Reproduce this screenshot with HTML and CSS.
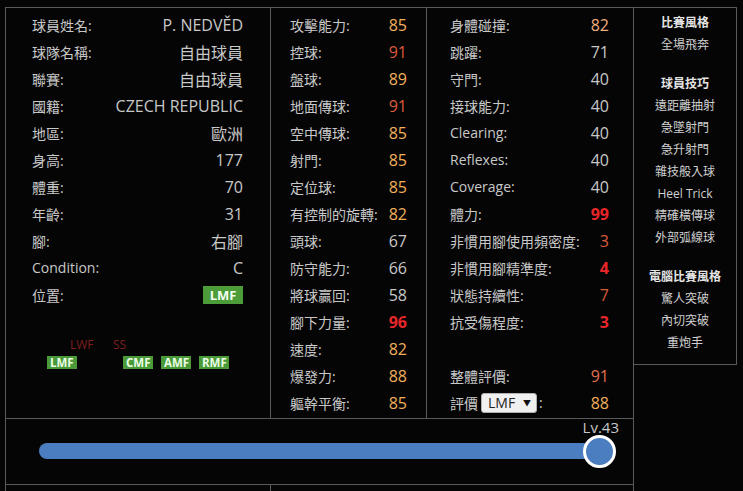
FILE: index.html
```html
<!DOCTYPE html>
<html lang="zh-Hant">
<head>
<meta charset="utf-8">
<title>P. NEDVĚD</title>
<link rel="stylesheet" href="styles.css">
</head>
<body>
<div class="page">
  <div class="sheet">
    <div class="cell info">
      <div class="row"><span class="k">球員姓名:</span><span class="v">P. NEDVĚD</span></div>
      <div class="row"><span class="k">球隊名稱:</span><span class="v">自由球員</span></div>
      <div class="row"><span class="k">聯賽:</span><span class="v">自由球員</span></div>
      <div class="row"><span class="k">國籍:</span><span class="v">CZECH REPUBLIC</span></div>
      <div class="row"><span class="k">地區:</span><span class="v">歐洲</span></div>
      <div class="row"><span class="k">身高:</span><span class="v">177</span></div>
      <div class="row"><span class="k">體重:</span><span class="v">70</span></div>
      <div class="row"><span class="k">年齡:</span><span class="v">31</span></div>
      <div class="row"><span class="k">腳:</span><span class="v">右腳</span></div>
      <div class="row"><span class="k">Condition:</span><span class="v">C</span></div>
      <div class="row"><span class="k">位置:</span><span class="badge">LMF</span></div>
      <div class="pitch">
        <span class="pin red lwf">LWF</span>
        <span class="pin red ss">SS</span>
        <span class="pin green lmf">LMF</span>
        <span class="pin green cmf">CMF</span>
        <span class="pin green amf">AMF</span>
        <span class="pin green rmf">RMF</span>
      </div>
    </div>
    <div class="cell stats mid">
      <div class="row"><span class="k">攻擊能力:</span><span class="v c80">85</span></div>
      <div class="row"><span class="k">控球:</span><span class="v c90">91</span></div>
      <div class="row"><span class="k">盤球:</span><span class="v c80">89</span></div>
      <div class="row"><span class="k">地面傳球:</span><span class="v c90">91</span></div>
      <div class="row"><span class="k">空中傳球:</span><span class="v c80">85</span></div>
      <div class="row"><span class="k">射門:</span><span class="v c80">85</span></div>
      <div class="row"><span class="k">定位球:</span><span class="v c80">85</span></div>
      <div class="row"><span class="k">有控制的旋轉:</span><span class="v c80">82</span></div>
      <div class="row"><span class="k">頭球:</span><span class="v">67</span></div>
      <div class="row"><span class="k">防守能力:</span><span class="v">66</span></div>
      <div class="row"><span class="k">將球贏回:</span><span class="v">58</span></div>
      <div class="row"><span class="k">腳下力量:</span><span class="v c95">96</span></div>
      <div class="row"><span class="k">速度:</span><span class="v c80">82</span></div>
      <div class="row"><span class="k">爆發力:</span><span class="v c80">88</span></div>
      <div class="row"><span class="k">軀幹平衡:</span><span class="v c80">85</span></div>
    </div>
    <div class="cell stats right">
      <div class="row"><span class="k">身體碰撞:</span><span class="v peach">82</span></div>
      <div class="row"><span class="k">跳躍:</span><span class="v">71</span></div>
      <div class="row"><span class="k">守門:</span><span class="v">40</span></div>
      <div class="row"><span class="k">接球能力:</span><span class="v">40</span></div>
      <div class="row"><span class="k">Clearing:</span><span class="v">40</span></div>
      <div class="row"><span class="k">Reflexes:</span><span class="v">40</span></div>
      <div class="row"><span class="k">Coverage:</span><span class="v">40</span></div>
      <div class="row"><span class="k">體力:</span><span class="v c95">99</span></div>
      <div class="row"><span class="k">非慣用腳使用頻密度:</span><span class="v c90">3</span></div>
      <div class="row"><span class="k">非慣用腳精準度:</span><span class="v c95">4</span></div>
      <div class="row"><span class="k">狀態持續性:</span><span class="v c90">7</span></div>
      <div class="row"><span class="k">抗受傷程度:</span><span class="v c95">3</span></div>
      <div class="row"></div>
      <div class="row"><span class="k">整體評價:</span><span class="v salmon">91</span></div>
      <div class="row"><span class="k pickrow">評價<span class="pick">LMF<span class="arrow">▼</span></span>:</span><span class="v c80">88</span></div>
    </div>
    <div class="cell level">
      <div class="track">
        <span class="lv">Lv.43</span>
        <span class="thumb"></span>
      </div>
    </div>
    <div class="cell foot"></div>
    <div class="cell foot wide"></div>
  </div>
  <div class="skills">
    <div class="group">
      <div class="head">比賽風格</div>
      <div>全場飛奔</div>
    </div>
    <div class="group">
      <div class="head">球員技巧</div>
      <div>遠距離抽射</div>
      <div>急墜射門</div>
      <div>急升射門</div>
      <div>雜技般入球</div>
      <div>Heel Trick</div>
      <div>精確橫傳球</div>
      <div>外部弧線球</div>
    </div>
    <div class="group">
      <div class="head">電腦比賽風格</div>
      <div>驚人突破</div>
      <div>內切突破</div>
      <div>重炮手</div>
    </div>
  </div>
</div>
</body>
</html>
```
FILE: styles.css
```css
* { box-sizing: border-box; }
html, body {
  margin: 0;
  padding: 0;
  background: #050505;
  overflow: hidden;
}
body {
  font-family: "Open Sans", "Noto Sans CJK TC", sans-serif;
  font-size: 14px;
  color: #c8c8c8;
}
.page {
  display: flex;
  align-items: flex-start;
  padding: 7px 0 0 5px;
}
.sheet {
  display: grid;
  grid-template-columns: 265px 156px 207px;
  grid-template-rows: 411px 66px 6px;
  border-left: 1px solid #5a5a5a;
  border-top: 1px solid #5a5a5a;
}
.cell {
  border-right: 1px solid #5a5a5a;
  border-bottom: 1px solid #5a5a5a;
}
.row {
  display: flex;
  justify-content: space-between;
  align-items: center;
  height: 27px;
  white-space: nowrap;
}
.k { font-size: 14px; }
.v { font-size: 16px; }
.info { padding: 3px 27px 0 26px; }
.mid { padding: 3px 19px 0 19px; }
.right { padding: 3px 24px 0 23px; }

.c80 { color: #f2b05a; }
.peach { color: #f0ae7e; }
.salmon { color: #e2704e; }
.c90 { color: #dc5a3a; }
.c95 { color: #e8262a; font-weight: 700; }

.badge {
  display: inline-block;
  width: 40px;
  height: 18px;
  line-height: 18px;
  text-align: center;
  background: #4c9c3a;
  color: #f4fff0;
  font-weight: 700;
  font-size: 13px;
}

.pitch {
  position: relative;
  height: 100px;
  margin-left: -26px;
}
.pin {
  position: absolute;
  top: 30px;
  font-size: 12px;
  line-height: 14px;
}
.red { color: #7d1f1f; }
.green {
  top: 48px;
  width: 30px;
  height: 13px;
  line-height: 13px;
  overflow: hidden;
  background: #4a9a3a;
  color: #eaffe4;
  font-weight: 700;
  font-size: 11.5px;
  padding-left: 3px;
  white-space: nowrap;
}
.lwf { left: 64px; }
.ss { left: 107px; }
.lmf { left: 41px; }
.cmf { left: 117px; }
.amf { left: 155px; }
.rmf { left: 193px; }

.pickrow {
  display: flex;
  align-items: center;
}
.pick {
  display: inline-flex;
  align-items: center;
  justify-content: space-between;
  width: 56px;
  height: 20px;
  margin: 0 2px 0 3px;
  padding: 0 5px 0 6px;
  background: #f0f0f0;
  border: 1px solid #b0b0b0;
  border-radius: 3px;
  color: #222;
  font-size: 14px;
}
.arrow { font-size: 8px; color: #111; }

.level { grid-column: 1 / 4; }
.track {
  position: relative;
  margin: 24px 0 0 33px;
  width: 561px;
  height: 16px;
  border-radius: 8px;
  background: #4a7ec0;
}
.thumb {
  position: absolute;
  right: -16px;
  top: -8px;
  width: 33px;
  height: 33px;
  border: 3px solid #ffffff;
  border-radius: 50%;
  background: #4a7ec0;
}
.lv {
  position: absolute;
  right: -19px;
  top: -26px;
  font-size: 15px;
  line-height: 20px;
  color: #c8c8c8;
}
.foot { border-bottom: none; }
.wide { grid-column: 2 / 4; }

.skills {
  width: 103px;
  border-top: 1px solid #5a5a5a;
  border-right: 1px solid #5a5a5a;
  border-bottom: 1px solid #5a5a5a;
  padding: 4px 0 10px;
  text-align: center;
  font-size: 12px;
  line-height: 22px;
  color: #d0d0d0;
}
.group + .group { margin-top: 17px; }
.head { font-weight: 700; color: #e4e4e4; }
```
